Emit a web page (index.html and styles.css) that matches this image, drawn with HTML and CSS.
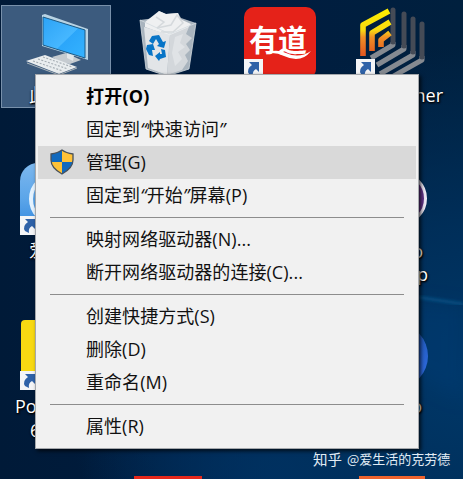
FILE: index.html
```html
<!DOCTYPE html>
<html lang="zh-CN">
<head>
<meta charset="utf-8">
<title>桌面</title>
<link rel="stylesheet" href="styles.css">
</head>
<body>
<main class="desktop">
  <svg class="beams" viewBox="0 0 463 479" aria-hidden="true">
    <defs>
      <filter id="soft"><feGaussianBlur stdDeviation="1.5"/></filter>
      <filter id="haze" x="-50%" y="-50%" width="200%" height="200%"><feGaussianBlur stdDeviation="9"/></filter>
    </defs>
    <path d="M400 300L463 306V400L400 370Z" fill="#003d78" opacity=".35" filter="url(#haze)"/>
    <path d="M410 296L463 304" stroke="#086096" stroke-width="3" opacity=".6" filter="url(#soft)"/>
  </svg>

  <div class="selection"></div>
  <svg class="icon pc" viewBox="0 0 66 62">
    <defs><linearGradient id="screen" x1="0" y1="0" x2="1" y2="1"><stop offset="0" stop-color="#2ca3f6"/><stop offset=".55" stop-color="#46b7ff"/><stop offset=".56" stop-color="#2ba6fa"/><stop offset="1" stop-color="#35b3ff"/></linearGradient></defs>
    <path d="M27 45L41 41L56 48L45 52Q35 51 27 45Z" fill="#c5cbd0"/>
    <path d="M42 40L49 43L48 49L42 46Z" fill="#e3e7e9"/>
    <path d="M17 3L20 2L63 17V48L60 47L17 34Z" fill="#b9d3e3"/>
    <path d="M18 5L60 18V46L18 33Z" fill="url(#screen)" stroke="#1c5b87"/>
    <path d="M1 49L20 43L52 55L34 62Z" fill="#e9edef"/>
    <path d="M2 51L34 63L52 56" fill="none" stroke="#adb5bb"/>
    <path d="M8 49L38 59M13 47L43 57M18 45L47 55" stroke="#a5adb3" stroke-width="1.1" stroke-dasharray="2 1.5"/>
  </svg>
  <span class="label pc-label">此电脑</span>

  <svg class="icon bin" viewBox="0 0 58 66">
    <path d="M1 10L16 8L20 1L27 4L39 3L42 8L57 13L50 59L28 66L7 59Z" fill="#a9b4be"/>
    <path d="M6 12L20 1L27 4L39 3L41 9L52 14L45 23L31 26L6 17Z" fill="#eff0f1"/>
    <path d="M17 7L25 12L18 18L32 15L38 5L44 13L34 22L22 22" fill="none" stroke="#d5d9dc" stroke-width="1.5"/>
    <path d="M5 17L31 25L28 65L9 58Z" fill="#e2e5e8"/>
    <path d="M31 25L50 17L47 24L53 28L47 34L51 40L46 45L49 51L43 60L28 65Z" fill="#d3d7db"/>
    <path d="M36 27L44 24L41 33L46 37L39 42L43 49L36 56L33 43Z" fill="#e0e3e6"/>
    <path d="M1 10L31 24L57 13M1 10L7 59L28 66L50 59L57 13" fill="none" stroke="#d3dae0" stroke-width=".8"/>
    <path d="M13 26L20 25L24 32L27 31L25 38L18 36L20 34L17 29L14 34L10 31ZM8 35L14 34L16 40L13 40L14 46L10 45L7 39ZM22 39L26 40L27 47L21 49L20 51L16 46L21 42L21 44L23 44Z" fill="#0875c7"/>
  </svg>

  <svg class="icon youdao" viewBox="0 0 72 68">
    <rect width="72" height="72" rx="10" fill="#e52219"/>
    <text class="logo-text" x="5" y="44" textLength="58" lengthAdjust="spacingAndGlyphs">有道</text>
    <path d="M28 44Q36 43 42 46Q55 52 67 44Q57 57 40 49Q34 46 28 46Z" fill="#fff"/>
  </svg>
  <svg class="icon shortcut s1" viewBox="0 0 19 19"><use href="#arrow"/></svg>

  <svg class="icon partner" viewBox="0 0 66 68">
    <defs>
      <linearGradient id="gold" gradientUnits="userSpaceOnUse" x1="0" y1="4" x2="0" y2="48"><stop offset="0" stop-color="#fbed00"/><stop offset=".45" stop-color="#f9dc10"/><stop offset=".62" stop-color="#f09025"/><stop offset="1" stop-color="#e45a20"/></linearGradient>
    </defs>
    <g fill="none" stroke="#858a91" stroke-width="5" stroke-linejoin="round">
      <path d="M34 36V39L12 52"/><path d="M45 39V43L18 59"/><path d="M54 45V49L21 68"/><path d="M63 50V54L33 71"/>
    </g>
    <g fill="none" stroke="#454b56" stroke-width="5" stroke-linecap="round">
      <path d="M34 4V36"/><path d="M45 8V40"/><path d="M54 13V46"/><path d="M63 18V51"/>
    </g>
    <g fill="none" stroke="url(#gold)" stroke-width="5.6" stroke-linejoin="round"><path d="M4 50V19L30 5"/><path d="M13 45V27L31 16"/><path d="M22 41V34L31 27"/></g>
  </svg>
  <svg class="icon shortcut s2" viewBox="0 0 19 19"><use href="#arrow"/></svg>
  <span class="label partner-label">Partner</span>

  <svg class="icon blueapp" viewBox="0 0 60 72">
    <defs><linearGradient id="sky" x1="0" y1="0" x2="0" y2="1"><stop stop-color="#7db8ee"/><stop offset=".5" stop-color="#5ba5e9"/><stop offset="1" stop-color="#2b82dc"/></linearGradient></defs>
    <rect width="72" height="72" rx="18" fill="url(#sky)"/><circle cx="36" cy="36" r="25" fill="none" stroke="#e5f3ff" stroke-width="4"/>
  </svg>
  <svg class="icon shortcut s3" viewBox="0 0 19 19"><use href="#arrow"/></svg>
  <span class="label blue-label">爱</span>
  <div class="yellow-app"></div>
  <svg class="icon shortcut s4" viewBox="0 0 19 19"><use href="#arrow"/></svg>
  <span class="label po-label">Po</span>
  <span class="label six-label">6</span>
  <div class="purple-app"></div>
  <span class="label o-label">o</span>
  <span class="label p-label">p</span>
  <div class="round-app"></div>
  <span class="label o2-label">o</span>
  <div class="red-edge"></div>
  <div class="orange-edge"></div>

  <nav class="menu">
    <div class="item default">打开(O)</div>
    <div class="item">固定到<q>快速访问</q></div>
    <div class="item active">
      <svg class="shield" viewBox="0 0 24 26">
        <defs><clipPath id="crest"><path d="M12 1Q16 4 23 5V11Q23 19 12 25Q1 19 1 11V5Q8 4 12 1Z"/></clipPath></defs>
        <g clip-path="url(#crest)"><path d="M0 0H12V13H0ZM12 13H24V26H12Z" fill="#1169bd"/><path d="M12 0H24V13H12ZM0 13H12V26H0Z" fill="#ffc238"/></g>
        <path d="M12 1Q16 4 23 5V11Q23 19 12 25Q1 19 1 11V5Q8 4 12 1Z" fill="none" stroke="#48515a" stroke-width="1.3"/>
      </svg>管理(G)</div>
    <div class="item">固定到<q>开始</q>屏幕(P)</div>
    <hr>
    <div class="item">映射网络驱动器(N)...</div>
    <div class="item">断开网络驱动器的连接(C)...</div>
    <hr>
    <div class="item">创建快捷方式(S)</div>
    <div class="item">删除(D)</div>
    <div class="item">重命名(M)</div>
    <hr>
    <div class="item">属性(R)</div>
  </nav>
  <div class="credit"><span>知乎</span><span>@爱生活的克劳德</span></div>
</main>
<svg class="symbols" aria-hidden="true"><symbol id="arrow" viewBox="0 0 19 19"><path d="M0 0H19V19H0Z" fill="#f4f5f7"/><path d="M5 3H15V13L12 10Q8 12 9 17L5 15Q2 10 8 6Z" fill="#2f62a8"/></symbol></svg>
</body>
</html>
```
FILE: styles.css
```css
* { box-sizing: border-box; }
body { margin: 0; overflow: hidden; }
.desktop {
  position: relative;
  width: 463px;
  height: 479px;
  overflow: hidden;
  font-family: "Open Sans", "Noto Sans CJK SC", sans-serif;
  background: radial-gradient(ellipse at 105% 78%, #003869 0%, rgba(0, 50, 96, .8) 28%, transparent 62%), radial-gradient(ellipse at 60% 105%, #003062 0%, transparent 50%), linear-gradient(90deg, #001a38, #001d40 55%, #00203e);
}
.beams { position: absolute; inset: 0; }
.symbols { position: absolute; width: 0; height: 0; }
.icon { position: absolute; }
.selection { position: absolute; left: 1px; top: 5px; width: 110px; height: 103px; background: #3c5b7e; border: 1px solid #7890aa; }
.pc { left: 25px; top: 12px; width: 66px; height: 62px; }
.bin { left: 139px; top: 10px; width: 58px; height: 66px; }
.youdao { left: 244px; top: 7px; width: 72px; height: 68px; }
.logo-text { font: 700 30px "Noto Sans CJK SC", sans-serif; fill: #fff; }
.partner { left: 359px; top: 6px; width: 66px; height: 68px; }
.blueapp { left: 20px; top: 163px; width: 60px; height: 72px; }
.shortcut { width: 19px; height: 19px; }
.s1 { left: 244px; top: 59px; }
.s2 { left: 356px; top: 59px; }
.s3 { left: 20px; top: 216px; }
.s4 { left: 20px; top: 371px; }
.label { position: absolute; color: #fff; font-size: 18px; line-height: 24px; white-space: nowrap; text-shadow: 1px 1px 2px #000, 0 1px 2px #000; }
.pc-label { left: 29px; top: 83px; }
.partner-label { right: 20px; top: 83px; }
.blue-label { left: 29px; top: 238px; }
.po-label { left: 15px; top: 394px; }
.six-label { left: 30px; top: 418px; }
.o-label { right: 40px; top: 239px; }
.p-label { right: 35px; top: 262px; }
.o2-label { right: 41px; top: 394px; }
.yellow-app { position: absolute; left: 21px; top: 320px; width: 70px; height: 70px; border-radius: 4px; background: #f8d912; }
.purple-app { position: absolute; left: 374px; top: 172px; width: 53px; height: 53px; border: 3px solid #eee8f5; border-radius: 50%; background: #65358c; }
.round-app { position: absolute; left: 370px; top: 325px; width: 58px; height: 62px; border-radius: 50%; background: linear-gradient(#2159b8, #316ee8); }
.red-edge { position: absolute; left: 134px; top: 476px; width: 68px; height: 3px; background: #e7281b; }
.orange-edge { position: absolute; left: 359px; top: 476px; width: 66px; height: 3px; background: #ef642e; }
.menu {
  position: absolute;
  left: 35px;
  top: 74px;
  width: 384px;
  height: 375px;
  padding: 5px 2px;
  color: #111;
  font-size: 18px;
  letter-spacing: .05px;
  background: #f1f1f1;
  border: 1px solid #a5a8ac;
  box-shadow: 2px 2px 4px rgba(0, 0, 0, .75);
}
.item { display: flex; align-items: center; position: relative; height: 33px; padding-left: 48px; line-height: 33px; white-space: nowrap; }
.item q { quotes: none; }
.item q::before { content: "“"; }
.item q::after { content: "”"; }
.item q::before, .item q::after { font-style: italic; letter-spacing: .4px; }
.default { color: #000; font-weight: 700; letter-spacing: .2px; }
.active { background: #d9d9d9; }
.shield { position: absolute; left: 12px; top: 3px; width: 24px; height: 26px; }
.menu hr { height: 1px; margin: 5px 12px; border: 0; background: #8d8d8d; }
.credit { position: absolute; left: 313px; top: 449px; display: flex; gap: 5px; color: #e3edf5; font: 13px/20px "Noto Sans CJK SC", sans-serif; white-space: nowrap; }
.credit span:first-child { font-size: 14.5px; }
```
